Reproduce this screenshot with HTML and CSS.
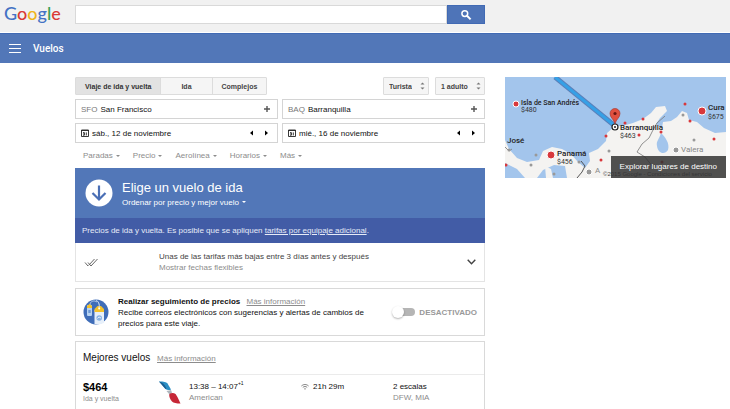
FILE: index.html
```
<!DOCTYPE html>
<html lang="es">

<head>
    <meta charset="UTF-8">
    <meta name="viewport" content="width=device-width, initial-scale=1.0">
    <title>Vuelos</title>
    <link rel="stylesheet" href="styles.css">
</head>

<body>
    <header class="top-bar page-grid">
        <a href="#" class="logo" aria-label="Google"><span class="blue">G</span><span class="red">o</span><span class="yellow">o</span><span class="blue">g</span><span class="green">l</span><span class="red">e</span></a>
        <form class="search">
            <input type="search" class="search-input" aria-label="Buscar">
            <button type="button" class="search-button" aria-label="Buscar">
                <svg width="12" height="12" viewBox="0 0 12 12" fill="none" stroke="#fff">
                    <circle cx="4.8" cy="4.6" r="2.9" stroke-width="1.5" />
                    <path d="M7 6.8L10.6 10.4" stroke-width="2" />
                </svg>
            </button>
        </form>
    </header>

    <nav class="nav-bar">
        <button type="button" class="menu-button" aria-label="Menú">
            <span></span><span></span><span></span>
        </button>
        <a href="#" class="nav-title">Vuelos</a>
    </nav>

    <div class="content page-grid">
        <main class="main">
            <!-- Trip type and passengers -->
            <div class="options">
                <div class="trip-type">
                    <button type="button" class="trip active">Viaje de ida y vuelta</button>
                    <button type="button" class="trip">Ida</button>
                    <button type="button" class="trip">Complejos</button>
                </div>
                <div class="select-box">
                    <select class="select" aria-label="Clase">
                        <option>Turista</option>
                    </select>
                    <svg class="select-arrows" width="5" height="8" viewBox="0 0 5 8" fill="#777"><path d="M.5 2.5L2.500 .5L4.500 2.500ZM.5 5.500L2.500 7.500L4.500 5.500Z" /></svg>
                </div>
                <div class="select-box">
                    <select class="select" aria-label="Pasajeros">
                        <option>1 adulto</option>
                    </select>
                    <svg class="select-arrows" width="5" height="8" viewBox="0 0 5 8" fill="#777"><path d="M.5 2.5L2.500 .5L4.500 2.500ZM.5 5.500L2.500 7.500L4.500 5.500Z" /></svg>
                </div>
            </div>

            <!-- Route and dates -->
            <div class="fields">
                <div class="field">
                    <label class="code" for="origin">SFO</label>
                    <input id="origin" type="text" value="San Francisco">
                    <button type="button" aria-label="Añadir origen"><svg width="6" height="6" viewBox="0 0 6 6" stroke="#555" stroke-width="1.4"><path d="M3 0V6M0 3H6" /></svg></button>
                </div>
                <div class="field">
                    <label class="code" for="destination">BAQ</label>
                    <input id="destination" type="text" value="Barranquilla">
                    <button type="button" aria-label="Añadir destino"><svg width="6" height="6" viewBox="0 0 6 6" stroke="#555" stroke-width="1.4"><path d="M3 0V6M0 3H6" /></svg></button>
                </div>
                <div class="field date">
                    <label for="departure" aria-label="Salida">
                        <svg width="8" height="8" viewBox="0 0 8 8" fill="none" stroke="#222"><path d="M.5 1H7.5V7.5H.5ZM.5 1.5H7.5M2 3.6H3.4V6.2H2M2.2 4.9H3.4M5.3 3.4V6.4" stroke-width=".9" /></svg>
                    </label>
                    <input id="departure" type="text" value="sáb., 12 de noviembre">
                    <button type="button" aria-label="Día anterior"><svg width="3" height="6" viewBox="0 0 3 6"><path d="M3 .5V5.500L0 3Z" /></svg></button>
                    <button type="button" aria-label="Día siguiente"><svg width="3" height="6" viewBox="0 0 3 6"><path d="M0 .5V5.500L3 3Z" /></svg></button>
                </div>
                <div class="field date">
                    <label for="return" aria-label="Regreso">
                        <svg width="8" height="8" viewBox="0 0 8 8" fill="none" stroke="#222"><path d="M.5 1H7.5V7.5H.5ZM.5 1.5H7.5M2 3.6H3.4V6.2H2M2.2 4.9H3.4M5.3 3.4V6.4" stroke-width=".9" /></svg>
                    </label>
                    <input id="return" type="text" value="mié., 16 de noviembre">
                    <button type="button" aria-label="Día anterior"><svg width="3" height="6" viewBox="0 0 3 6"><path d="M3 .5V5.500L0 3Z" /></svg></button>
                    <button type="button" aria-label="Día siguiente"><svg width="3" height="6" viewBox="0 0 3 6"><path d="M0 .5V5.500L3 3Z" /></svg></button>
                </div>
            </div>

            <div class="filters">
                <button type="button" class="drop">Paradas</button>
                <button type="button" class="drop">Precio</button>
                <button type="button" class="drop">Aerolínea</button>
                <button type="button" class="drop">Horarios</button>
                <button type="button" class="drop">Más</button>
            </div>

            <!-- Choose a flight -->
            <section class="choose">
                <div class="choose-head">
                    <svg width="28" height="28" viewBox="0 0 28 28" fill="none">
                        <circle cx="14" cy="14" r="13.5" fill="#fff" />
                        <path d="M14 6.5V20.5M7.5 14L14 20.5L20.5 14" stroke="#4a6fb5" stroke-width="2.2" />
                    </svg>
                    <div>
                        <h1>Elige un vuelo de ida</h1>
                        <button type="button" class="drop sort">Ordenar por precio y mejor vuelo</button>
                    </div>
                </div>
                <p class="notice">Precios de ida y vuelta. Es posible que se apliquen <a href="#">tarifas por equipaje adicional</a>.</p>
                <div class="tip">
                    <svg class="checks" width="15" height="9" viewBox="0 0 15 9" fill="none" stroke="#666"><path d="M1 4.5L4 8M4 4.5L7 8L13.5 1M4.5 7.5L10.5 1" /></svg>
                    <div class="tip-text">
                        <p>Unas de las tarifas más bajas entre 3 días antes y después</p>
                        <a href="#">Mostrar fechas flexibles</a>
                    </div>
                    <button type="button" aria-label="Mostrar más"><svg width="9" height="6" viewBox="0 0 9 6" fill="none" stroke="#444" stroke-width="1.4"><path d="M.7 .8L4.5 4.8L8.3 .8" /></svg></button>
                </div>
            </section>

            <!-- Price tracking -->
            <section class="card track">
                <svg width="26" height="26" viewBox="0 0 26 26">
                    <circle cx="13" cy="13" r="12.5" fill="#3f6db8" />
                    <path d="M7 6C7 2 11 1 14 3" fill="none" stroke="#b9cdea" />
                    <rect x="4" y="6" width="5" height="11" rx="1" fill="#b7d3f2" />
                    <path d="M4 9V7L6.5 5L9 7V9Z" fill="#f4c22b" />
                    <rect x="5.3" y="11" width="2.4" height="3" fill="#6d9ad6" />
                    <path d="M11.5 11H21V24L16 25.5L11.5 25Z" fill="#e7f0fa" />
                    <path d="M11.5 13V10L14.5 7H18L21 10V13Z" fill="#f4c22b" />
                    <path d="M16 9C17 5 15 2 13 1" fill="none" stroke="#dbe6f5" />
                    <circle cx="16.2" cy="9.5" r="1" fill="#fff" />
                    <circle cx="16.2" cy="19" r="2.8" fill="#8ab4e4" />
                    <path d="M14.5 19.5L16 18L18 19" fill="none" stroke="#fff" stroke-width=".8" />
                </svg>
                <div class="track-text">
                    <h2>Realizar seguimiento de precios <a href="#" class="more">Más información</a></h2>
                    <p>Recibe correos electrónicos con sugerencias y alertas de cambios de precios para este viaje.</p>
                </div>
                <label class="switch"><input type="checkbox">DESACTIVADO</label>
            </section>

            <!-- Results -->
            <section class="card results">
                <h2>Mejores vuelos <a href="#" class="more">Más información</a></h2>
                <article class="flight">
                    <div>
                        <p class="price">$464</p>
                        <p class="trip-label">Ida y vuelta</p>
                    </div>
                    <svg width="22" height="23" viewBox="0 0 22 23">
                        <path d="M0 .5C5 .5 7 1 8.5 2.5L12 8.5C10.5 9.5 8 9 6.5 8Z" fill="#2b8fc4" />
                        <path d="M0 .5C3 1 5.5 3 7.5 7.5L6.5 8Z" fill="#1a5e92" />
                        <path d="M7.5 10C9 9.5 11 9.5 12 9L13 11.5L11 14Z" fill="#aeb6bd" />
                        <path d="M10.5 13C12 11.5 15 11.5 16.5 13C17.5 14 20 19 21.5 22.5C17.5 22.5 14.5 22 13 20.5C11.5 19 9.5 15 10.5 13Z" fill="#c62636" />
                    </svg>
                    <div>
                        <p>13:38 – 14:07<sup>+1</sup></p>
                        <p class="muted">American</p>
                    </div>
                    <p class="duration">
                        <svg width="8" height="6" viewBox="0 0 8 6" fill="none" stroke="#666" stroke-width=".8"><path d="M.4 2C2.6 0 5.4 0 7.6 2M1.8 3.4C3.2 2.2 4.8 2.2 6.2 3.4" /><path d="M3 4.4H5L4 5.8Z" fill="#666" stroke="none" /></svg>
                        21h 29m
                    </p>
                    <div>
                        <p>2 escalas</p>
                        <p class="muted">DFW, MIA</p>
                    </div>
                </article>
            </section>
        </main>

        <aside class="map">
            <svg class="map-image" viewBox="0 0 221 101" preserveAspectRatio="xMidYMid slice">
                <rect width="221" height="101" fill="#a3c5ec" />
                <!-- Land -->
                <path d="M0 63L4 72L12 81L22 85L34 83L38 74L47 70L57 72L66 77L73 85L80 91L85 84L84 76L93 72L101 64L102 56L109 50L121 48L128 46L138 42L146 36L151 30L160 29L162 34L155 41L151 47L157 51L158 45L166 44L172 40L177 34L182 36L184 43L192 45L199 51L210 56L221 55V101H0Z" fill="#f4f3f1" />
                <path d="M0 86L12 92L20 101H0Z" fill="#a3c5ec" />
                <path d="M32 101L38 93L49 88L60 89L62 101Z" fill="#a3c5ec" />
                <path d="M40 89L46 92L48 101H41Z" fill="#f4f3f1" />
                <path d="M156 56C160 60 165 66 163 73C160 78 153 77 152 69C151 64 154 63 156 56Z" fill="#a3c5ec" />
                <path d="M160 39L152 46L148 53L144 61L137 67L132 75L140 80L148 90" fill="none" stroke="#777" stroke-width=".8" />
                <path d="M76 84L80 89L77 95L72 101" fill="none" stroke="#444" stroke-width=".9" />
                <path d="M0 70L4 74L7 72" fill="none" stroke="#777" stroke-width=".8" />
                <!-- Route -->
                <path d="M50 0L110 49" stroke="#5b7fb8" stroke-width="5" />
                <path d="M50 0L110 49" stroke="#36a0e6" stroke-width="3" />
                <g fill="#d8383c">
                    <circle cx="138" cy="42" r="1.5" /><circle cx="180" cy="27" r="1.5" /><circle cx="185" cy="44" r="1.5" /><circle cx="156" cy="55" r="1.5" />
                    <circle cx="134" cy="58" r="1.5" /><circle cx="209" cy="62" r="1.5" /><circle cx="101" cy="59" r="1.5" /><circle cx="96" cy="83" r="1.5" />
                    <circle cx="157" cy="85" r="1.5" /><circle cx="1" cy="88" r="1.5" /><circle cx="120" cy="46" r="1.5" />
                </g>
                <g fill="#999">
                    <circle cx="178" cy="38" r="1.5" /><circle cx="189" cy="63" r="1.5" /><circle cx="104" cy="74" r="1.5" /><circle cx="26" cy="88" r="1.5" />
                    <circle cx="31" cy="78" r="1.5" /><circle cx="49" cy="97" r="1.5" /><circle cx="74" cy="85" r="1.5" /><circle cx="4" cy="73" r="1.5" />
                </g>
                <g fill="#d8383c" stroke="#fff">
                    <circle cx="11" cy="27" r="3" /><circle cx="46" cy="78" r="4" /><circle cx="197" cy="34" r="4" />
                </g>
                <g fill="#999" stroke="#fff">
                    <circle cx="171" cy="73" r="3" /><circle cx="84" cy="95" r="3" />
                </g>
                <circle cx="110" cy="50" r="3" fill="#fff" stroke="#222" stroke-width="1.2" />
                <circle cx="110" cy="50" r="1" fill="#222" />
                <path d="M110 47C109 42 105 41 105 36.500A5 5 0 0 1 115 36.500C115 41 111 42 110 47Z" fill="#e0503f" stroke="#a33329" stroke-width=".6" />
                <circle cx="110" cy="36.500" r="1.600" fill="#6b1712" />
                <g class="city">
                    <text class="small" x="16" y="28">Isla de San Andrés</text>
                    <text x="2" y="66">José</text>
                    <text x="52" y="79">Panamá</text>
                    <text x="115" y="53">Barranquilla</text>
                    <text x="203" y="33">Cura</text>
                </g>
                <g class="fare">
                    <text x="16" y="35">$480</text>
                    <text x="52" y="87">$456</text>
                    <text x="115" y="61">$463</text>
                    <text x="203" y="42">$675</text>
                </g>
                <g class="place">
                    <text x="176" y="75">Valera</text>
                    <text x="90" y="96">A</text>
                    <text class="credit" x="98" y="99">©2015 Google - Condiciones del servicio</text>
                </g>
            </svg>
            <a href="#" class="explore">Explorar lugares de destino</a>
        </aside>
    </div>
</body>

</html>
```
FILE: styles.css
```
* {
    box-sizing: border-box;
}

body {
    margin: 0;
    min-height: 100vh;
    display: flex;
    flex-direction: column;
    font-family: "Liberation Sans", Arial, sans-serif;
    font-size: 8px;
    line-height: 11px;
    color: #111;
    background-color: #fff;
}

h1, h2, p {
    margin: 0;
}

button, input, select {
    margin: 0;
    padding: 0;
    border: 0;
    background: none;
    font: inherit;
    color: inherit;
}

button {
    cursor: pointer;
}

svg {
    display: block;
    flex: none;
}

/* Header and content share the same columns */
.page-grid {
    display: grid;
    grid-template-columns: minmax(0, 410fr) minmax(0, 221fr);
    column-gap: 20px;
    padding: 0 4px 0 75px;
}

.top-bar {
    position: relative;
    height: 32px;
    padding-top: 5px;
    background-color: #f1f1f1;
}

.logo {
    position: absolute;
    left: 4px;
    top: 2px;
    font-family: Lato, sans-serif;
    font-size: 18px;
    font-weight: 500;
    line-height: 22px;
    text-decoration: none;
}

.blue { color: #4472c4; }
.red { color: #d93a36; }
.yellow { color: #f0b41c; }
.green { color: #35a156; }

.search {
    display: flex;
    height: 19px;
}

.search-input {
    flex: 1;
    min-width: 0;
    padding: 0 6px;
    border: 1px solid #d9d9d9;
    background-color: #fff;
}

.search-button {
    width: 38px;
    display: flex;
    align-items: center;
    justify-content: center;
    background-color: #4e74b8;
    border: 1px solid #416ab4;
}

.nav-bar {
    display: flex;
    align-items: center;
    gap: 12px;
    height: 30px;
    margin-top: 1px;
    padding: 0 9px;
    background-color: #5277b8;
    border-top: 1px solid #416ab4;
}

.menu-button {
    display: flex;
    flex-direction: column;
    gap: 3px;
    width: 12px;
}

.menu-button span {
    height: 1px;
    background-color: #fff;
}

.nav-title {
    font-family: Roboto, sans-serif;
    font-size: 10px;
    font-weight: 500;
    color: #fff;
    text-decoration: none;
}

.content {
    flex: 1;
    padding-top: 14px;
}

.main {
    display: flex;
    flex-direction: column;
}

.options {
    display: flex;
    gap: 6px;
    font-size: 7px;
    font-weight: bold;
    color: #444;
}

.trip-type {
    display: flex;
    margin-right: auto;
    border: 1px solid #dcdcdc;
    border-radius: 1px;
    background-color: #f5f5f5;
}

.trip {
    height: 16px;
    padding: 0 9px;
}

.trip:nth-child(2) {
    padding: 0 20px;
}

.trip + .trip {
    border-left: 1px solid #dcdcdc;
}

.trip.active {
    background-color: #e2e2e2;
    color: #333;
}

.select-box {
    position: relative;
}

.select {
    appearance: none;
    height: 18px;
    padding: 0 16px 0 5px;
    border: 1px solid #dcdcdc;
    border-radius: 1px;
    background-color: #f5f5f5;
}

.select-arrows {
    position: absolute;
    right: 4px;
    top: 5px;
    pointer-events: none;
}

.fields {
    display: grid;
    grid-template-columns: 1fr 1fr;
    gap: 4px;
    margin-top: 4px;
}

.field {
    display: flex;
    align-items: center;
    gap: 3px;
    height: 20px;
    padding: 0 7px 0 5px;
    border: 1px solid #d4d4d4;
}

.field input {
    flex: 1;
    min-width: 0;
}

.code {
    color: #777;
}

.field.date {
    padding-right: 5px;
}

.date button {
    width: 12px;
    display: flex;
    justify-content: center;
}

.filters {
    display: flex;
    gap: 13px;
    padding: 7px 8px;
    color: #8c8c8c;
}

.drop {
    display: flex;
    align-items: center;
    gap: 3px;
}

.drop::after {
    content: "";
    border: 2px solid transparent;
    border-top-color: currentColor;
    border-bottom: 0;
}

.choose-head {
    display: flex;
    align-items: center;
    gap: 9px;
    height: 50px;
    padding: 0 10px;
    background-color: #5277b8;
    color: #fff;
}

.choose-head h1 {
    font-size: 13px;
    line-height: 18px;
    font-weight: normal;
}

.notice {
    padding: 7px;
    background-color: #425ca6;
    color: #e6ebf7;
}

.notice a {
    color: inherit;
}

.tip {
    display: flex;
    align-items: center;
    height: 39px;
    padding: 0 8px;
    border: 1px solid #e4e4e4;
    border-top: 0;
    color: #444;
}

.checks {
    margin-right: 60px;
}

.tip-text {
    flex: 1;
}

.tip-text a {
    display: block;
    color: #8c8c8c;
    text-decoration: none;
}

.card {
    margin-top: 6px;
    border: 1px solid #d9d9d9;
}

.track {
    display: flex;
    align-items: center;
    gap: 9px;
    height: 48px;
    padding: 0 7px;
}

.track-text {
    flex: 1;
}

.track-text h2 {
    font-size: 8px;
    line-height: 11px;
}

.more {
    margin-left: 4px;
    font-size: 8px;
    font-weight: normal;
    color: #8c8c8c;
}

.switch {
    display: flex;
    align-items: center;
    gap: 4px;
    font-weight: bold;
    color: #999;
}

.switch input {
    appearance: none;
    position: relative;
    width: 22px;
    height: 8px;
    border-radius: 4px;
    background-color: #b5b5b5;
}

.switch input::before {
    content: "";
    position: absolute;
    left: -1px;
    top: -2px;
    width: 12px;
    height: 12px;
    border-radius: 50%;
    background-color: #fff;
    box-shadow: 0 1px 2px rgba(0, 0, 0, 0.3);
}

.results {
    flex: 1;
    margin-top: 5px;
    border-bottom: 0;
}

.results h2 {
    padding: 7px;
    border-bottom: 1px solid #ebebeb;
    font-size: 10px;
    line-height: 17px;
    font-weight: normal;
}

.flight {
    display: grid;
    grid-template-columns: 76fr 30fr 112fr 92fr 84fr;
    padding: 6px 7px 0;
}

.flight svg {
    align-self: center;
}

.price {
    font-size: 11px;
    line-height: 13px;
    font-weight: bold;
    color: #000;
}

.trip-label {
    font-size: 7px;
    line-height: 9px;
    color: #8c8c8c;
}

.flight sup {
    font-size: 5px;
    line-height: 5px;
}

.duration {
    display: flex;
    align-items: center;
    align-self: start;
    gap: 4px;
}

.muted {
    color: #8c8c8c;
}

/* Destination map */
.map {
    position: relative;
    align-self: start;
    overflow: hidden;
}

.map-image {
    width: 100%;
    font-family: Roboto, sans-serif;
    font-size: 8px;
}

.map-image .small {
    font-size: 7px;
}

.city {
    font-weight: 500;
    fill: #222;
}

.fare {
    font-size: 7px;
    fill: #333;
}

.place {
    fill: #888;
}

.place .credit {
    font-family: "Liberation Sans", Arial, sans-serif;
    font-size: 6px;
    fill: #444;
}

.explore {
    position: absolute;
    right: 0;
    bottom: 0;
    padding: 5px 9px 6px;
    background-color: rgba(51, 51, 51, 0.85);
    color: #fff;
    text-decoration: none;
}
```
